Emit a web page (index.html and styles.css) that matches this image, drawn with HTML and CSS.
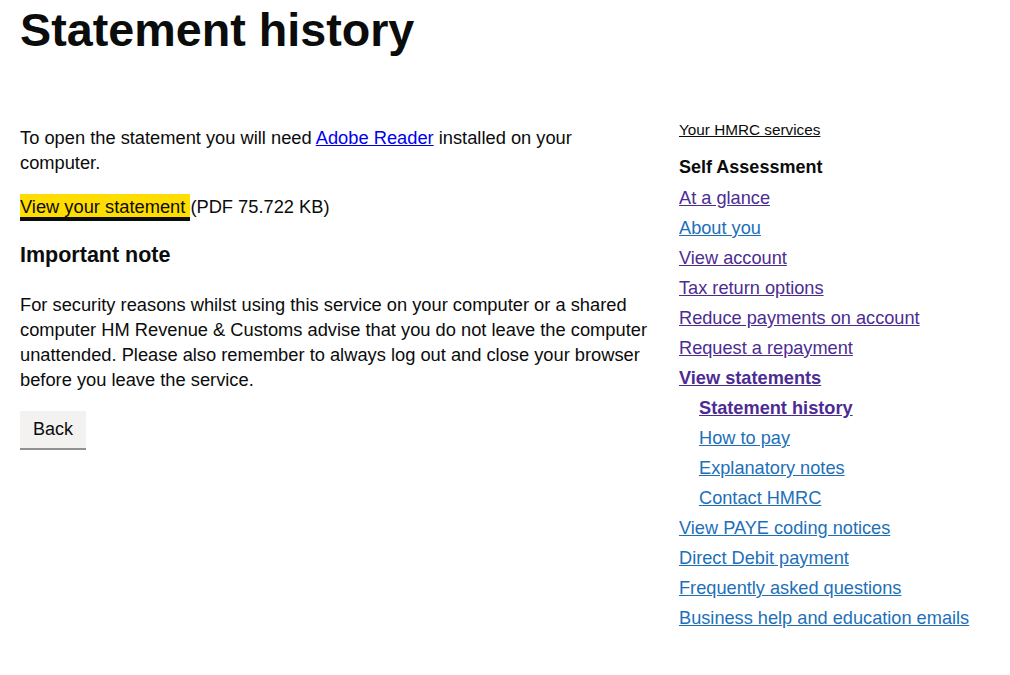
FILE: index.html
```html
<!DOCTYPE html>
<html lang="en">
<head>
    <meta charset="UTF-8">
    <meta name="viewport" content="width=device-width, initial-scale=1.0">
    <title>Statement history</title>
    <link rel="stylesheet" href="styles.css">
</head>
<body>
    <main class="page">
        <!-- Page title -->
        <h1 class="page-title">Statement history</h1>

        <div class="columns">
            <!-- Main content -->
            <section class="content">
                <p class="body-text">To open the statement you will need <a class="plain-link" href="#">Adobe Reader</a> installed on your computer.</p>
                <p class="body-text"><a class="focus-link" href="#">View your statement </a><span class="file-info">(PDF 75.722 KB)</span></p>

                <h2 class="sub-heading">Important note</h2>
                <p class="body-text">For security reasons whilst using this service on your computer or a shared computer HM Revenue &amp; Customs advise that you do not leave the computer unattended. Please also remember to always log out and close your browser before you leave the service.</p>

                <button class="back-btn" type="button">Back</button>
            </section>

            <!-- Side navigation -->
            <nav class="side-nav">
                <a class="services-link" href="#">Your HMRC services</a>
                <h3 class="nav-heading">Self Assessment</h3>
                <ul class="nav-list">
                    <li><a class="visited" href="#">At a glance</a></li>
                    <li><a href="#">About you</a></li>
                    <li><a class="visited" href="#">View account</a></li>
                    <li><a class="visited" href="#">Tax return options</a></li>
                    <li><a class="visited" href="#">Reduce payments on account</a></li>
                    <li><a class="visited" href="#">Request a repayment</a></li>
                    <li><a class="visited current" href="#">View statements</a>
                        <ul class="nav-list sub-list">
                            <li><a class="visited current" href="#">Statement history</a></li>
                            <li><a href="#">How to pay</a></li>
                            <li><a href="#">Explanatory notes</a></li>
                            <li><a href="#">Contact HMRC</a></li>
                        </ul>
                    </li>
                    <li><a href="#">View PAYE coding notices</a></li>
                    <li><a href="#">Direct Debit payment</a></li>
                    <li><a href="#">Frequently asked questions</a></li>
                    <li><a href="#">Business help and education emails</a></li>
                </ul>
            </nav>
        </div>
    </main>
</body>
</html>
```

FILE: styles.css
```css
body {
    margin: 0;
    padding: 0;
    background-color: #ffffff;
    color: #0b0c0c;
    font-family: "Liberation Sans", Arial, sans-serif;
}

.page {
    padding: 0 20px;
}

.page-title {
    margin: 5px 0 0;
    font-size: 46.7px;
    line-height: 50px;
    font-weight: bold;
}

.columns {
    display: grid;
    grid-template-columns: 630px 1fr;
    column-gap: 29px;
    margin-top: 65px;
}

/* Main content */
.body-text {
    margin: 5px 0 0;
    font-size: 18.3px;
    line-height: 25px;
}

.body-text + .body-text {
    margin-top: 19px;
}

.plain-link {
    color: #0000ee;
    text-decoration: underline;
}

.focus-link {
    color: #0b0c0c;
    background-color: #ffdd00;
    text-decoration: none;
    box-shadow: 0 -2px #ffdd00, 0 4px #0b0c0c;
}

.sub-heading {
    margin: 21px 0 0;
    font-size: 21.5px;
    line-height: 30px;
    font-weight: bold;
}

.sub-heading + .body-text {
    margin-top: 22px;
}

.back-btn {
    margin-top: 19px;
    padding: 0 13px;
    height: 39px;
    font-family: "Liberation Sans", Arial, sans-serif;
    font-size: 18px;
    color: #0b0c0c;
    background-color: #f3f2f1;
    border: none;
    border-bottom: 2px solid #929191;
    cursor: pointer;
}

/* Side navigation */
.services-link {
    display: block;
    font-size: 15.3px;
    line-height: 20px;
    color: #0b0c0c;
}

.nav-heading {
    margin: 15px 0 0;
    font-size: 18px;
    line-height: 25px;
    font-weight: bold;
}

.nav-list {
    list-style: none;
    margin: 3px 0 0;
    padding: 0;
}

.nav-list li a {
    display: inline-block;
    font-size: 18.2px;
    line-height: 30px;
    color: #1d70b8;
}

.nav-list li a.visited {
    color: #4c2c92;
}

.nav-list li a.current {
    font-weight: bold;
}

.sub-list {
    margin: 0;
    padding-left: 20px;
}
```
